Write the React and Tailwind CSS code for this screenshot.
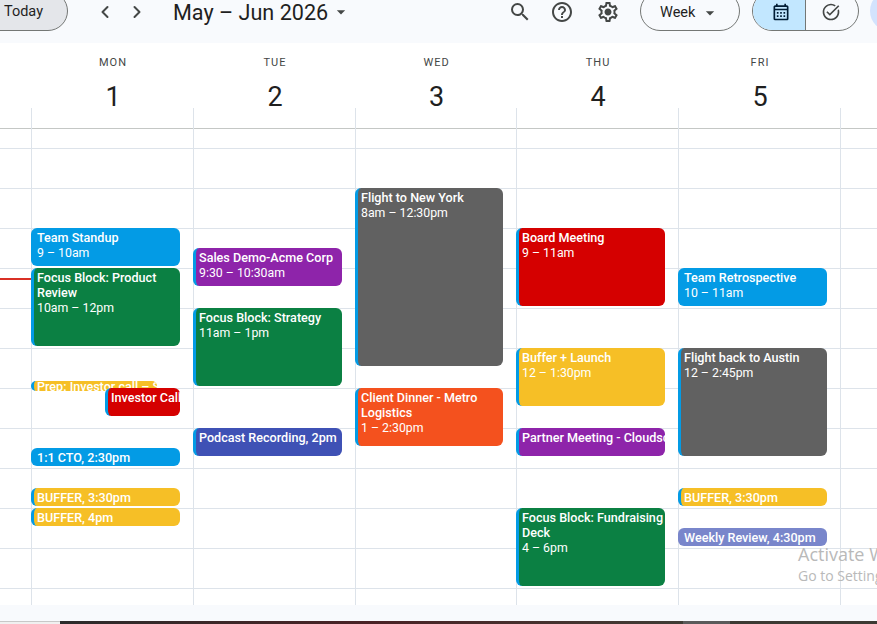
import { ChevronLeft, ChevronRight } from "lucide-react";
import {
  MdSearch,
  MdOutlineHelpOutline,
  MdArrowDropDown,
  MdOutlineCalendarMonth,
  MdOutlineTaskAlt,
} from "react-icons/md";

const font = "font-['Roboto','Liberation_Sans',sans-serif]";

const days = [
  {
    name: "MON",
    num: 1,
    width: "w-[162px]",
    events: [
      { title: "Team Standup", time: "9 – 10am", top: 120, h: 38, color: "bg-[#039be5]" },
      { title: "Focus Block: Product Review", time: "10am – 12pm", top: 160, h: 78, color: "bg-[#0b8043]", bar: true },
      { title: "Prep: Investor call – Se", top: 273, h: 10, w: 126, color: "bg-[#f6bf26]", bar: true, clip: true },
      { title: "Investor Call", top: 280, h: 28, left: 74, w: 75, color: "bg-[#d50000]", bar: true },
      { title: "1:1 CTO, 2:30pm", top: 340, h: 18, color: "bg-[#039be5]" },
      { title: "BUFFER, 3:30pm", top: 380, h: 18, color: "bg-[#f6bf26]", bar: true },
      { title: "BUFFER, 4pm", top: 400, h: 18, color: "bg-[#f6bf26]", bar: true },
    ],
  },
  {
    name: "TUE",
    num: 2,
    width: "w-[162px]",
    events: [
      { title: "Sales Demo-Acme Corp", time: "9:30 – 10:30am", top: 140, h: 38, color: "bg-[#8e24aa]", bar: true },
      { title: "Focus Block: Strategy", time: "11am – 1pm", top: 200, h: 78, color: "bg-[#0b8043]", bar: true },
      { title: "Podcast Recording, 2pm", top: 320, h: 28, color: "bg-[#3f51b5]", bar: true },
    ],
  },
  {
    name: "WED",
    num: 3,
    width: "w-[161px]",
    events: [
      { title: "Flight to New York", time: "8am – 12:30pm", top: 80, h: 178, w: 148, color: "bg-[#616161]", bar: true },
      { title: "Client Dinner - Metro Logistics", time: "1 – 2:30pm", top: 280, h: 58, w: 148, color: "bg-[#f4511e]", bar: true },
    ],
  },
  {
    name: "THU",
    num: 4,
    width: "w-[162px]",
    events: [
      { title: "Board Meeting", time: "9 – 11am", top: 120, h: 78, color: "bg-[#d50000]", bar: true },
      { title: "Buffer + Launch", time: "12 – 1:30pm", top: 240, h: 58, color: "bg-[#f6bf26]", bar: true },
      { title: "Partner Meeting - Cloudscale", top: 320, h: 28, color: "bg-[#8e24aa]", bar: true },
      { title: "Focus Block: Fundraising Deck", time: "4 – 6pm", top: 400, h: 78, color: "bg-[#0b8043]", bar: true },
    ],
  },
  {
    name: "FRI",
    num: 5,
    width: "w-[162px]",
    events: [
      { title: "Team Retrospective", time: "10 – 11am", top: 160, h: 38, color: "bg-[#039be5]" },
      { title: "Flight back to Austin", time: "12 – 2:45pm", top: 240, h: 108, color: "bg-[#616161]", bar: true },
      { title: "BUFFER, 3:30pm", top: 380, h: 18, color: "bg-[#f6bf26]", bar: true },
      { title: "Weekly Review, 4:30pm", top: 420, h: 18, color: "bg-[#7986cb]" },
    ],
  },
];

const hours = Array.from({ length: 11 });

// 20px all-day strip, half an hour stub, then 40px hours
function Slots() {
  return (
    <>
      <div className="h-[21px] shrink-0 border-b border-[#c4c7c5]" />
      <div className="h-[20px] shrink-0 border-b border-[#dde3ea]" />
      {hours.map((_, i) => (
        <div key={i} className="h-[40px] shrink-0 border-b border-[#dde3ea]" />
      ))}
    </>
  );
}

function EventCard({ e }) {
  return (
    <div
      className={`absolute overflow-hidden rounded-[6px] ${e.color} border-l-[3px] ${e.bar ? "border-[#039be5]" : "border-transparent"} text-white`}
      style={{ top: e.top, height: e.h, left: (e.left ?? 0) - 1, width: e.w ?? 149 }}
    >
      <div className={`pl-[3px] text-[12.6px] font-medium leading-[15px] ${e.clip ? "-mt-[2px] whitespace-nowrap" : "pt-[2px]"} ${e.time ? "" : "whitespace-nowrap"}`}>
        {e.title}
      </div>
      {e.time && <div className="mt-[1px] pl-[3px] text-[12.3px] leading-[15px]">{e.time}</div>}
    </div>
  );
}

function DayColumn({ day }) {
  return (
    <div className={`relative ${day.width} shrink-0 border-l border-[#dde3ea]`}>
      <Slots />
      {day.events.map((e) => (
        <EventCard key={e.title} e={e} />
      ))}
    </div>
  );
}

function GearIcon() {
  return (
    <svg width="24" height="24" viewBox="0 0 24 24" fill="currentColor" className="ml-[4px]">
      <path d="M19.43 12.98c.04-.32.07-.64.07-.98 0-.34-.03-.66-.07-.98l2.11-1.65c.19-.15.24-.42.12-.64l-2-3.46c-.09-.16-.26-.25-.44-.25-.06 0-.12.01-.17.03l-2.49 1c-.52-.4-1.08-.73-1.69-.98l-.38-2.65C14.46 2.18 14.25 2 14 2h-4c-.25 0-.46.18-.49.42l-.38 2.65c-.61.25-1.17.59-1.69.98l-2.49-1c-.06-.02-.12-.03-.18-.03-.17 0-.34.09-.43.25l-2 3.46c-.13.22-.07.49.12.64l2.11 1.65c-.04.32-.07.65-.07.98 0 .33.03.66.07.98l-2.11 1.65c-.19.15-.24.42-.12.64l2 3.46c.09.16.26.25.44.25.06 0 .12-.01.17-.03l2.49-1c.52.4 1.08.73 1.69.98l.38 2.65c.03.24.24.42.49.42h4c.25 0 .46-.18.49-.42l.38-2.65c.61-.25 1.17-.59 1.69-.98l2.49 1c.06.02.12.03.18.03.17 0 .34-.09.43-.25l2-3.46c.12-.22.07-.49-.12-.64l-2.11-1.65zm-1.98-1.71c.04.31.05.52.05.73 0 .21-.02.43-.05.73l-.14 1.13.89.7 1.08.84-.7 1.21-1.27-.51-1.04-.42-.9.68c-.43.32-.84.56-1.25.73l-1.06.43-.16 1.13-.2 1.35h-1.4l-.19-1.35-.16-1.13-1.06-.43c-.43-.18-.83-.41-1.23-.71l-.91-.7-1.06.43-1.27.51-.7-1.21 1.08-.84.89-.7-.14-1.13c-.03-.31-.05-.54-.05-.74s.02-.43.05-.73l.14-1.13-.89-.7-1.08-.84.7-1.21 1.27.51 1.04.42.9-.68c.43-.32.84-.56 1.25-.73l1.06-.43.16-1.13.2-1.35h1.39l.19 1.35.16 1.13 1.06.43c.43.18.83.41 1.23.71l.91.7 1.06-.43 1.27-.51.7 1.21-1.07.85-.89.7.14 1.13zM12 8.5c-1.93 0-3.5 1.57-3.5 3.5s1.57 3.5 3.5 3.5 3.5-1.57 3.5-3.5-1.57-3.5-3.5-3.5z" />
    </svg>
  );
}

function TopBar() {
  return (
    <div className="flex h-[43px] shrink-0 overflow-hidden bg-[#f8fafd] text-[#1f1f1f]">
      <div className="-ml-[40px] -mt-[9px] flex h-[40px] w-[108px] shrink-0 items-center justify-end rounded-full border border-[#747775] bg-[#e4e6ea] pr-[24px] pt-[2px] text-[14.5px] text-[#1f1f1f]">
        Today
      </div>
      <div className="ml-[27px] flex h-[24px] shrink-0 items-center gap-[12px] text-[#444746]">
        <ChevronLeft size={20} strokeWidth={2.4} />
        <ChevronRight size={20} strokeWidth={2.4} />
      </div>
      <div className="ml-[26px] mt-[1px] h-[24px] w-[155px] shrink-0 whitespace-nowrap text-[21.6px] leading-[24px] text-[#1f1f1f]">May – Jun 2026</div>
      <MdArrowDropDown size={20} className="ml-[3px] mt-[2px] shrink-0 text-[#444746]" />
      <div className="ml-[157px] flex h-[24px] shrink-0 items-center gap-[18px] text-[#444746]">
        <MdSearch size={24} />
        <MdOutlineHelpOutline size={24} />
        <GearIcon />
      </div>
      <div className="ml-[20px] -mt-[9px] flex h-[40px] w-[100px] shrink-0 items-center rounded-full border border-[#747775] pl-[19px] pt-[3px] text-[14.5px]">
        Week
        <MdArrowDropDown size={20} className="ml-[5px] text-[#444746]" />
      </div>
      <div className="ml-[12px] -mt-[9px] flex h-[40px] w-[107px] shrink-0 overflow-hidden rounded-full border border-[#747775]">
        <div className="flex w-[53px] items-center justify-center border-r border-[#747775] bg-[#c2e7ff] pl-[3px] pt-[2px] text-[#001d35]">
          <MdOutlineCalendarMonth size={20} />
        </div>
        <div className="flex flex-1 items-center justify-center pr-[3px] pt-[2px] text-[#444746]">
          <MdOutlineTaskAlt size={20} />
        </div>
      </div>
      <div className="ml-[11px] -mt-[9px] h-[40px] w-[40px] shrink-0 rounded-full bg-[#d3e3fd]" />
    </div>
  );
}

function DayHeader({ day }) {
  return (
    <div className={`${day.width} flex shrink-0 flex-col items-center`}>
      <div className="mt-[14px] text-[11px] leading-[12px] tracking-[1px] text-[#444746]">{day.name}</div>
      <div className="mt-[13px] text-[27px] leading-[30px] text-[#1f1f1f]">{day.num}</div>
    </div>
  );
}

export default function App() {
  return (
    <div className={`flex h-[624px] w-[877px] flex-col overflow-hidden bg-white ${font}`}>
      <TopBar />
      <div className="flex h-[65px] shrink-0 pl-[32px]">
        {days.map((d) => (
          <DayHeader key={d.name} day={d} />
        ))}
      </div>
      <div className="relative flex h-[497px] shrink-0 overflow-hidden">
        <div className="w-[31px] shrink-0">
          <Slots />
        </div>
        {days.map((d) => (
          <DayColumn key={d.name} day={d} />
        ))}
        <div className="flex-1 border-l border-[#dde3ea]">
          <Slots />
        </div>
        {/* now line */}
        <div className="absolute left-0 top-[170px] h-[2px] w-[31px] bg-[#d93025]" />
        {/* windows watermark */}
        <div className="absolute left-[798px] top-[434px] whitespace-nowrap font-['Open_Sans',sans-serif] text-[#b9b9b9]">
          <div className="text-[18px] leading-[24px]">Activate Windows</div>
          <div className="text-[14px] leading-[20px]">Go to Settings to activate Windows.</div>
        </div>
      </div>
      <div className="h-[16px] shrink-0 bg-[#f8fafd]" />
      <div className="flex h-[3px] shrink-0">
        <div className="w-[60px] border-t border-[#c8c8c8] bg-[#f0f0f0]" />
        <div className="w-[623px] bg-linear-to-r from-[#2b2b2b] via-[#4a2125] to-[#3f3c35]" />
        <div className="w-[47px] bg-[#5a5a5a]" />
        <div className="flex-1 bg-[#3c3a33]" />
      </div>
    </div>
  );
}
